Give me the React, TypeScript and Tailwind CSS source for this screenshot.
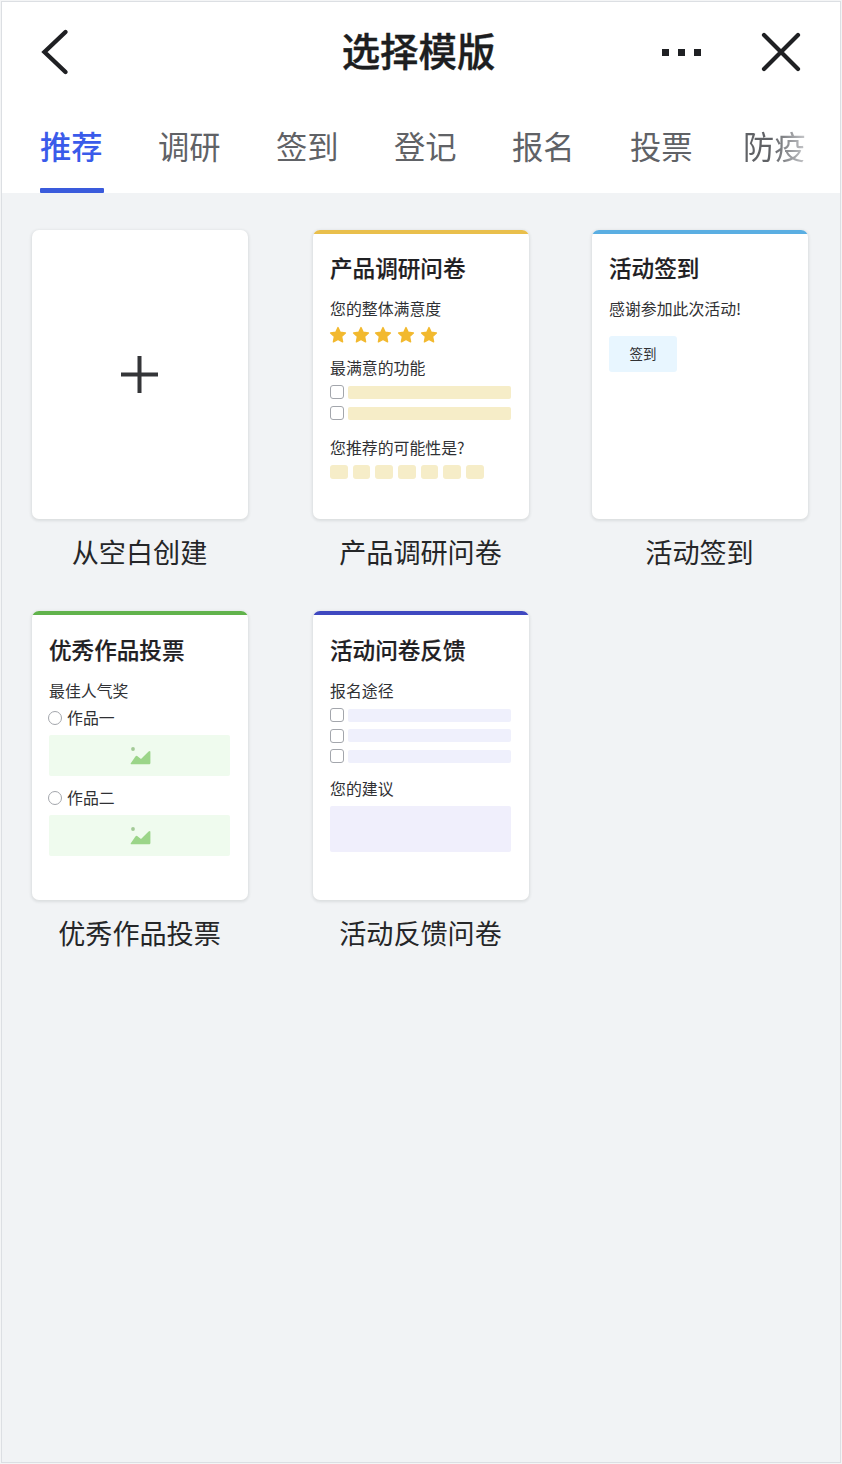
import type { ReactNode } from "react";

const tabs = ["推荐", "调研", "签到", "登记", "报名", "投票"];

function Star() {
  return (
    <svg className="h-[18px] w-[18px]" viewBox="0 0 18 18">
      <path
        d="M9 1.6 11.2 6.3 16.4 7 12.6 10.6 13.6 15.8 9 13.3 4.4 15.8 5.4 10.6 1.6 7 6.8 6.3Z"
        fill="#f2b92f"
        stroke="#f2b92f"
        strokeWidth="1.4"
        strokeLinejoin="round"
      />
    </svg>
  );
}

function Picture() {
  return (
    <svg className="ml-[2px] h-[18px] w-[21px]" viewBox="0 0 21 18">
      <circle cx="3" cy="2" r="1.9" fill="#a3ca97" />
      <path
        d="M0.8 16.2 5.4 9.6Q6.6 8.2 7.8 9.4L11 12 18.6 4.6Q20.4 3.2 20.4 5.2V16Q20.4 17.2 19.2 17.2H1.2Q0.2 17.2 0.8 16.2Z"
        fill="#9bd589"
      />
    </svg>
  );
}

function Card({ label, bar, children }: { label: string; bar?: string; children: ReactNode }) {
  return (
    <div className="flex w-[216px] flex-col items-center">
      <div className="h-[289px] w-full overflow-hidden rounded-[7px] bg-white shadow-[0_1px_3px_1px_rgba(31,35,41,0.10)]">
        {bar && <div className={`h-1 ${bar}`} />}
        {children}
      </div>
      <div className="mt-[13px] -ml-px h-10 text-[27.1px] leading-10 whitespace-nowrap text-[#252628]">{label}</div>
    </div>
  );
}

function Title({ children }: { children: ReactNode }) {
  return (
    <h2 className="mt-[18px] h-8 text-[22.6px] leading-8 font-medium whitespace-nowrap text-[#1f2023] [-webkit-text-stroke:0.2px_#1f2023]">
      {children}
    </h2>
  );
}

function Line({ children }: { children: ReactNode }) {
  return <p className="h-5 text-[15.9px] leading-5 whitespace-nowrap text-[#303134]">{children}</p>;
}

function Option({ color }: { color: string }) {
  return (
    <div className="flex h-[14px] items-center gap-[4px]">
      <span className="h-[14px] w-[14px] shrink-0 rounded-[3px] border border-[#a3a6ac]" />
      <span className={`h-[13px] w-[163px] rounded-[2px] ${color}`} />
    </div>
  );
}

function Vote({ text }: { text: string }) {
  return (
    <div>
      <div className="flex h-5 items-center gap-[5px]">
        <span className="-ml-px h-[14px] w-[14px] rounded-full border border-[#a3a6ac]" />
        <Line>{text}</Line>
      </div>
      <div className="mt-[7px] flex h-[41px] w-[181px] items-center justify-center rounded-[2px] bg-[#effbee]">
        <Picture />
      </div>
    </div>
  );
}

export default function App() {
  return (
    <div className="h-[1464px] w-[842px] bg-[#f4f5f6] p-px font-['Noto_Sans_CJK_SC',sans-serif]">
      <div className="flex h-full flex-col border border-[#dcdfe3] bg-[#f1f3f5]">
        <header className="h-[191px] bg-white">
          <div className="grid h-[100px] grid-cols-[1fr_auto_1fr] items-center">
            <svg className="ml-[35px] h-12 w-8" viewBox="0 0 32 48" fill="none" stroke="#1f2023" strokeWidth="4.4">
              <path d="M28.5 4 7.5 24 28.5 44" strokeLinecap="round" />
            </svg>
            <h1 className="mr-[5px] -mt-[7px] text-[38.4px] leading-[56px] font-medium whitespace-nowrap text-[#1d1e20] [-webkit-text-stroke:0.4px_#1d1e20]">
              选择模版
            </h1>
            <div className="flex items-center justify-end pr-[37px]">
              <div className="flex gap-[9px]">
                <span className="h-[7px] w-[7px] bg-[#1f2023]" />
                <span className="h-[7px] w-[7px] bg-[#1f2023]" />
                <span className="h-[7px] w-[7px] bg-[#1f2023]" />
              </div>
              <svg className="ml-[58px] h-11 w-11" viewBox="0 0 44 44" fill="none" stroke="#1f2023" strokeWidth="4.2">
                <path d="M5 5 39 39M39 5 5 39" strokeLinecap="round" />
              </svg>
            </div>
          </div>
          <nav className="flex h-[91px] pl-[38px] text-[31.3px] leading-[46px] whitespace-nowrap text-[#606266]">
            {tabs.map((tab, i) => (
              <div key={tab} className={`flex w-[118px] flex-col items-start ${i === 0 ? "font-medium text-[#3a5bea]" : ""}`}>
                <span className="mt-[21px] h-[65px]">{tab}</span>
                {i === 0 && <span className="h-[5px] w-16 rounded-[1px] bg-[#3a5bdc]" />}
              </div>
            ))}
            <span className="mt-[21px] -ml-[5px] h-[46px] bg-linear-to-r from-[#606266] from-45% to-[#c8c9cc] bg-clip-text text-transparent">
              防疫
            </span>
          </nav>
        </header>

        <main className="grid grid-cols-[281px_279px_216px] gap-y-[39px] pt-[37px] pl-[30px]">
          <Card label="从空白创建">
            <div className="flex h-full items-center justify-center">
              <svg className="-ml-[2px] h-[37px] w-[37px]" viewBox="0 0 37 37" stroke="#343538" strokeWidth="4">
                <path d="M0 18.5H37M18.5 0V37" />
              </svg>
            </div>
          </Card>

          <Card label="产品调研问卷" bar="bg-[#e9bf4c]">
            <div className="pl-[17px]">
              <Title>产品调研问卷</Title>
              <div className="mt-[15px]">
                <Line>您的整体满意度</Line>
              </div>
              <div className="mt-[7px] -ml-px flex gap-[4.7px]">
                <Star />
                <Star />
                <Star />
                <Star />
                <Star />
              </div>
              <div className="mt-[14px]">
                <Line>最满意的功能</Line>
              </div>
              <div className="mt-[7px] flex flex-col gap-[7px]">
                <Option color="bg-[#f6edc8]" />
                <Option color="bg-[#f6edc8]" />
              </div>
              <div className="mt-[18px]">
                <Line>您推荐的可能性是?</Line>
              </div>
              <div className="mt-[7px] flex gap-[5px]">
                {Array.from({ length: 7 }, (_, i) => (
                  <span key={i} className="h-[14px] w-[17.7px] rounded-[3px] bg-[#f6edc8]" />
                ))}
              </div>
            </div>
          </Card>

          <Card label="活动签到" bar="bg-[#5aaee2]">
            <div className="pl-[17px]">
              <Title>活动签到</Title>
              <div className="mt-[15px]">
                <Line>感谢参加此次活动!</Line>
              </div>
              <div className="mt-[17px] flex h-[36px] w-[68px] items-center justify-center rounded-[3px] bg-[#e8f6ff] pb-[3px] text-[13.5px] leading-5 text-[#303134]">
                签到
              </div>
            </div>
          </Card>

          <Card label="优秀作品投票" bar="bg-[#61b34c]">
            <div className="pt-px pl-[17px]">
              <Title>优秀作品投票</Title>
              <div className="mt-[15px] mb-[7px]">
                <Line>最佳人气奖</Line>
              </div>
              <div className="flex flex-col gap-3">
                <Vote text="作品一" />
                <Vote text="作品二" />
              </div>
            </div>
          </Card>

          <Card label="活动反馈问卷" bar="bg-[#3f48c0]">
            <div className="pt-px pl-[17px]">
              <Title>活动问卷反馈</Title>
              <div className="mt-[15px]">
                <Line>报名途径</Line>
              </div>
              <div className="mt-[7px] flex flex-col gap-[6.5px]">
                <Option color="bg-[#eff0fc]" />
                <Option color="bg-[#eff0fc]" />
                <Option color="bg-[#eff0fc]" />
              </div>
              <div className="mt-[16px]">
                <Line>您的建议</Line>
              </div>
              <div className="mt-[7px] h-[46px] w-[181px] rounded-[2px] bg-[#f0effc]" />
            </div>
          </Card>
        </main>
      </div>
    </div>
  );
}
